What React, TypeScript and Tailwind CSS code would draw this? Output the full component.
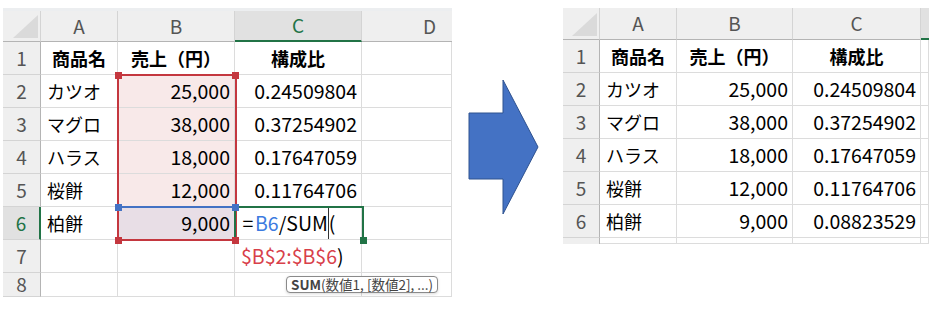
import React from 'react';

const font = "font-['Noto_Sans_CJK_JP','Noto_Sans_CJK_SC',sans-serif]";

type Row = { name: string; sales: string; ratio: string };

const rows: Row[] = [
  { name: 'カツオ', sales: '25,000', ratio: '0.24509804' },
  { name: 'マグロ', sales: '38,000', ratio: '0.37254902' },
  { name: 'ハラス', sales: '18,000', ratio: '0.17647059' },
  { name: '桜餅', sales: '12,000', ratio: '0.11764706' },
  { name: '柏餅', sales: '9,000', ratio: '0.08823529' },
];

// Corner cell with the little "select all" triangle
const Corner = () => (
  <div className="relative bg-[#efefef] border-r border-b border-r-[#d4d4d4] border-b-[#b4b4b4]">
    <svg className="absolute right-[2px] bottom-[3px]" width="25" height="23" viewBox="0 0 25 23">
      <polygon points="0,23 25,23 25,0" fill="#dadada" />
    </svg>
  </div>
);

const ColHead = ({ label, active }: { label: string; active?: boolean }) => (
  <div
    className={`flex items-center justify-center text-[19px] border-r border-r-[#d4d4d4] ${
      active ? 'bg-[#e1e1e1] text-[#217346] border-b-2 border-b-[#217346]' : 'bg-[#efefef] text-[#555] border-b border-b-[#b4b4b4]'
    }`}
  >
    {label}
  </div>
);

const RowHead = ({ label, active }: { label: string; active?: boolean }) => (
  <div
    className={`flex items-center justify-center text-[19px] border-b border-b-[#d4d4d4] ${
      active ? 'bg-[#e1e1e1] text-[#217346] border-r-2 border-r-[#217346]' : 'bg-[#efefef] text-[#555] border-r border-r-[#b4b4b4]'
    }`}
  >
    {label}
  </div>
);

const Cell = ({
  children,
  align = 'left',
  bold,
  num,
  className,
}: {
  children?: React.ReactNode;
  align?: 'left' | 'right' | 'center';
  bold?: boolean;
  num?: boolean;
  className?: string;
}) => {
  const justify = align === 'right' ? 'justify-end pr-[4px]' : align === 'center' ? 'justify-center' : 'justify-start pl-[6px]';
  return (
    <div
      className={`flex items-center whitespace-nowrap text-black border-r border-b border-[#dcdcdc] ${justify} ${
        num ? 'text-[19.5px]' : 'text-[18px]'
      } ${bold ? 'font-bold' : ''} ${className || ''}`}
    >
      {children}
    </div>
  );
};

const Handle = ({ x, y, color }: { x: number; y: number; color: string }) => (
  <div className={`absolute w-[7px] h-[7px] ${color}`} style={{ left: x - 3, top: y - 3 }} />
);

// Sheet while the formula in C6 is being typed
function EditingSheet() {
  return (
    <div className={`relative ml-[3px] mt-[8px] ${font}`}>
      <div className="h-[3px] w-[449px] bg-[#eceef0]" />
      <div className="grid grid-cols-[38px_77px_117px_127px_90px] grid-rows-[31px_repeat(7,33px)_24px]">
        <Corner />
        <ColHead label="A" />
        <ColHead label="B" />
        <ColHead label="C" active />
        <div className="flex items-center justify-end pr-[16px] text-[19px] text-[#555] bg-[#efefef] border-b border-b-[#b4b4b4]">D</div>

        <RowHead label="1" />
        <Cell align="center" bold>商品名</Cell>
        <Cell align="center" bold>売上（円）</Cell>
        <Cell align="center" bold>構成比</Cell>
        <Cell />

        {rows.slice(0, 4).map((r, i) => (
          <React.Fragment key={r.name}>
            <RowHead label={String(i + 2)} />
            <Cell>{r.name}</Cell>
            <Cell align="right" num className="bg-[#f8e9e9]">{r.sales}</Cell>
            <Cell align="right" num>{r.ratio}</Cell>
            <Cell />
          </React.Fragment>
        ))}

        <RowHead label="6" active />
        <Cell>柏餅</Cell>
        <Cell align="right" num className="bg-[#e8dee6]">9,000</Cell>
        <Cell num className="pl-[4px]">
          <span className="inline-block w-[14px] text-center">=</span>
          <span className="text-[#3c7be0]">B6</span>
          <span>/SUM</span>
          {/* text cursor */}
          <span className="w-px h-[32px] bg-[#333]" />
          <span>(</span>
        </Cell>
        <Cell />

        <RowHead label="7" />
        <Cell />
        <Cell />
        <Cell num className="pl-[4px]">
          <span className="text-[#d8404a]">$B$2:$B$6</span>
          <span>)</span>
        </Cell>
        <Cell />

        <RowHead label="8" />
        <Cell />
        <Cell />
        <Cell />
        <Cell />
      </div>

      {/* referenced range B2:B6 */}
      <div className="absolute left-[114px] top-[66px] w-[120px] h-[167px] border-2 border-[#c4373f]" />
      <div className="absolute left-[114px] top-[198px] w-[120px] h-[2px] bg-[#4472c4]" />
      {/* active cell C6 */}
      <div className="absolute left-[231px] top-[198px] w-[130px] h-[34px] border-t-2 border-l-2 border-r-2 border-[#217346]" />

      <Handle x={115} y={67} color="bg-[#c4373f]" />
      <Handle x={232} y={67} color="bg-[#c4373f]" />
      <Handle x={115} y={199} color="bg-[#4472c4]" />
      <Handle x={232} y={199} color="bg-[#4472c4]" />
      <Handle x={115} y={232} color="bg-[#c4373f]" />
      <Handle x={232} y={232} color="bg-[#c4373f]" />
      <Handle x={360} y={232} color="bg-[#217346]" />

      {/* function hint */}
      <div className="absolute left-[283px] top-[268px] h-[17px] px-[4px] flex items-center rounded-[4px] border border-[#8a8a8a] bg-white text-[13.5px] leading-none text-[#444] whitespace-nowrap shadow-[0_1px_3px_rgba(0,0,0,0.15)]">
        <span className="font-bold">SUM</span>
        <span>(数値1, [数値2], ...)</span>
      </div>
    </div>
  );
}

// Sheet after the formula has been filled down
function ResultSheet() {
  return (
    <div className={`ml-[22px] mt-[8px] w-[366px] overflow-hidden ${font}`}>
      <div className="grid grid-cols-[37px_77px_116px_128px_8px] grid-rows-[32px_repeat(6,33px)_6px]">
        <Corner />
        <ColHead label="A" />
        <ColHead label="B" />
        <ColHead label="C" />
        <div className="bg-[#e1e1e1] border-b-2 border-b-[#217346]" />

        <RowHead label="1" />
        <Cell align="center" bold>商品名</Cell>
        <Cell align="center" bold>売上（円）</Cell>
        <Cell align="center" bold>構成比</Cell>
        <Cell />

        {rows.map((r, i) => (
          <React.Fragment key={r.name}>
            <RowHead label={String(i + 2)} />
            <Cell>{r.name}</Cell>
            <Cell align="right" num>{r.sales}</Cell>
            <Cell align="right" num>{r.ratio}</Cell>
            <Cell />
          </React.Fragment>
        ))}

        <div className="bg-[#efefef] border-r border-r-[#b4b4b4]" />
        <Cell />
        <Cell />
        <Cell />
        <Cell />
      </div>
    </div>
  );
}

export default function App() {
  return (
    <div className="w-[929px] h-[321px] bg-white flex items-start overflow-hidden">
      <EditingSheet />
      <svg className="ml-[14px] mt-[78px] shrink-0" width="75" height="140" viewBox="0 0 75 140">
        <polygon
          points="3,35 37,35 37,2 72,69 37,136 37,101 3,101"
          fill="#4472c4"
          stroke="#2f528f"
          strokeWidth="1"
        />
      </svg>
      <ResultSheet />
    </div>
  );
}
